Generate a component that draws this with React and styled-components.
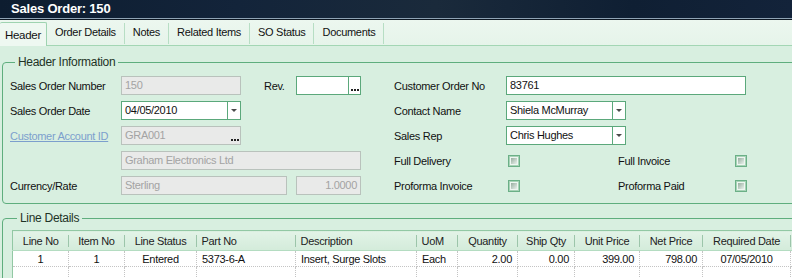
import React from 'react'
import styled, { createGlobalStyle } from 'styled-components'

const Global = createGlobalStyle`
  body {
    margin: 0;
    overflow: hidden;
    background: #d8efe0;
    font-family: "Liberation Sans", Arial, sans-serif;
    font-size: 11px;
    letter-spacing: -0.3px;
    color: #111;
  }
`

const Window = styled.div`
  width: 792px;
  height: 278px;
  overflow: hidden;
  background: #d8efe0;
`

const TitleBar = styled.div`
  height: 18px;
  line-height: 18px;
  padding-left: 11px;
  background: linear-gradient(90deg, #0d1d30 0%, #13243a 30%, #1a2a3b 55%, #0f1f33 80%, #13233a 100%);
  border-bottom: 1px solid #8fa3b4;
  box-shadow: 0 1px 0 #0c1621;
  color: #fff;
  font-weight: bold;
  font-size: 13px;
  letter-spacing: -0.2px;
`

const TabStrip = styled.div`
  margin-top: 1px;
  height: 25px;
  display: flex;
  align-items: flex-end;
  background: linear-gradient(180deg, #ecf7ef, #e6f4ea);
  border-bottom: 1px solid #a3d6b4;
`

const Tab = styled.div`
  height: ${p => (p.$active ? '23px' : '21px')};
  line-height: ${p => (p.$active ? '25px' : '19px')};
  padding: 0 ${p => (p.$active ? '5px' : '8px')};
  border-right: 1px solid ${p => (p.$active ? '#9ed3b0' : '#b7dec4')};
  border-top: ${p => (p.$active ? '1px solid #9ed3b0' : 'none')};
  border-radius: ${p => (p.$active ? '2px 2px 0 0' : '0')};
  background: ${p => (p.$active ? '#eef8f1' : 'transparent')};
  margin-bottom: ${p => (p.$active ? '-1px' : '1px')};
  font-size: ${p => (p.$active ? '11.5px' : '11px')};
  white-space: nowrap;
`

const Body = styled.div`
  padding: 9px 0 0 2px;
`

const Group = styled.fieldset`
  margin: 0 0 ${p => p.$mb || 0}px 0;
  width: 820px;
  padding: ${p => p.$pad};
  border: 1px solid #5fae7e;
  border-radius: 4px;
  box-sizing: border-box;
`

const Legend = styled.legend`
  margin-left: 5px;
  padding: 0 3px;
  font-size: 12px;
  color: #1e3326;
  line-height: 14px;
`

const FormArea = styled.div`
  display: flex;
  gap: 33px;
`

const Column = styled.div`
  display: flex;
  flex-direction: column;
  width: ${p => p.$w}px;
`

const Row = styled.div`
  height: 25px;
  display: flex;
  align-items: center;
`

const Label = styled.div`
  width: ${p => p.$w || 111}px;
  flex: none;
  font-size: 11px;
  white-space: nowrap;
`

const LinkLabel = styled(Label)`
  color: #7c9fcd;
  text-decoration: underline;
`

const Box = styled.div`
  width: ${p => p.$w}px;
  height: 19px;
  box-sizing: border-box;
  flex: none;
  display: flex;
  align-items: stretch;
  margin-left: ${p => p.$ml || 0}px;
  border: 1px solid ${p => (p.$disabled ? '#b9c2bc' : '#5ba87b')};
  background: ${p => (p.$disabled ? '#e9eae9' : '#fff')};
  color: ${p => (p.$disabled ? '#a3a3a3' : '#111')};
`

const BoxText = styled.div`
  flex: 1;
  padding: 0 3px;
  line-height: 17px;
  font-size: 11px;
  text-align: ${p => p.$align || 'left'};
  overflow: hidden;
  white-space: nowrap;
`

const DropButton = styled.div`
  width: 12px;
  border-left: 1px solid #5ba87b;
  display: flex;
  align-items: center;
  justify-content: center;
  &::after {
    content: '';
    border-left: 3px solid transparent;
    border-right: 3px solid transparent;
    border-top: 3px solid #4a4a4a;
  }
`

const EllipsisButton = styled.div`
  width: 12px;
  border-left: 1px solid ${p => (p.$disabled ? 'transparent' : '#5ba87b')};
  display: flex;
  align-items: flex-end;
  justify-content: center;
  gap: 1px;
  padding-bottom: 3px;
  box-sizing: border-box;
`

const Dot = styled.span`
  width: 2px;
  height: 2px;
  background: #222;
`

const Check = styled.div`
  width: 12px;
  height: 12px;
  box-sizing: border-box;
  margin-left: 2px;
  border: 1px solid #6bb087;
  padding: 2px;
  background: #eef6f1;
  box-shadow: inset 0 0 0 1px #a8d3b7;
  flex: none;
  &::after {
    content: '';
    display: block;
    width: 100%;
    height: 100%;
    background: linear-gradient(135deg, #97ad9f, #e9f1ec);
  }
`

const CheckCell = styled.div`
  width: 112px;
  flex: none;
  display: flex;
`

const Grid = styled.table`
  border-collapse: collapse;
  table-layout: fixed;
  width: 800px;
  background: #fff;
  border-top: 1px solid #92c8a4;
  border-left: 1px solid #92c8a4;
  font-size: 11px;
`

const Head = styled.th`
  height: 19px;
  padding: 0 5px;
  font-weight: normal;
  background: linear-gradient(180deg, #e2f3e7, #d3ebda);
  border-bottom: 1px solid #b4dcc1;
  text-align: ${p => p.$align || 'center'};
  white-space: nowrap;
  position: relative;
  color: #222;
  &::after {
    content: '';
    position: absolute;
    right: 0;
    top: 4px;
    bottom: 3px;
    border-right: 1px solid #9cc5aa;
  }
`

const Cell = styled.td`
  height: 15px;
  padding: 0 5px;
  text-align: ${p => p.$align || 'center'};
  border-right: 1px dotted #c4c4c4;
  border-bottom: 1px dotted #c4c4c4;
  white-space: nowrap;
  overflow: hidden;
`

const columns = [
  { name: 'Line No', w: 56 },
  { name: 'Item No', w: 56 },
  { name: 'Line Status', w: 72 },
  { name: 'Part No', w: 99, align: 'left' },
  { name: 'Description', w: 121, align: 'left' },
  { name: 'UoM', w: 41, align: 'left' },
  { name: 'Quantity', w: 60 },
  { name: 'Ship Qty', w: 57 },
  { name: 'Unit Price', w: 65 },
  { name: 'Net Price', w: 63 },
  { name: 'Required Date', w: 88 },
  { name: '', w: 22 },
]

const lines = [
  [
    ['1'], ['1'], ['Entered'], ['5373-6-A', 'left'], ['Insert, Surge Slots', 'left'],
    ['Each', 'left'], ['2.00', 'right'], ['0.00', 'right'], ['399.00', 'right'],
    ['798.00', 'right'], ['07/05/2010'], [''],
  ],
  [[''], [''], [''], [''], [''], [''], [''], [''], [''], [''], [''], ['']],
]

const tabs = ['Header', 'Order Details', 'Notes', 'Related Items', 'SO Status', 'Documents']

const Ellipsis = ({ disabled }) => (
  <EllipsisButton $disabled={disabled}>
    <Dot /><Dot /><Dot />
  </EllipsisButton>
)

export default function App() {
  return (
    <Window>
      <Global />
      <TitleBar>Sales Order: 150</TitleBar>
      <TabStrip>
        {tabs.map((t, i) => (
          <Tab key={t} $active={i === 0}>{t}</Tab>
        ))}
      </TabStrip>
      <Body>
        <Group $pad="4px 0 5px 7px" $mb={7}>
          <Legend>Header Information</Legend>
          <FormArea>
            <Column $w={351}>
              <Row>
                <Label>Sales Order Number</Label>
                <Box $w={120} $disabled><BoxText>150</BoxText></Box>
                <Label $w={32} style={{ marginLeft: 23 }}>Rev.</Label>
                <Box $w={65}><BoxText /><Ellipsis /></Box>
              </Row>
              <Row>
                <Label>Sales Order Date</Label>
                <Box $w={120}><BoxText>04/05/2010</BoxText><DropButton /></Box>
              </Row>
              <Row>
                <LinkLabel>Customer Account ID</LinkLabel>
                <Box $w={120} $disabled><BoxText>GRA001</BoxText><Ellipsis disabled /></Box>
              </Row>
              <Row>
                <Label />
                <Box $w={240} $disabled><BoxText>Graham Electronics Ltd</BoxText></Box>
              </Row>
              <Row>
                <Label>Currency/Rate</Label>
                <Box $w={166} $disabled><BoxText>Sterling</BoxText></Box>
                <Box $w={65} $ml={9} $disabled><BoxText $align="right">1.0000</BoxText></Box>
              </Row>
            </Column>
            <Column $w={360}>
              <Row>
                <Label $w={112}>Customer Order No</Label>
                <Box $w={240}><BoxText>83761</BoxText></Box>
              </Row>
              <Row>
                <Label $w={112}>Contact Name</Label>
                <Box $w={120}><BoxText>Shiela McMurray</BoxText><DropButton /></Box>
              </Row>
              <Row>
                <Label $w={112}>Sales Rep</Label>
                <Box $w={120}><BoxText>Chris Hughes</BoxText><DropButton /></Box>
              </Row>
              <Row>
                <Label $w={112}>Full Delivery</Label>
                <CheckCell><Check /></CheckCell>
                <Label $w={115}>Full Invoice</Label>
                <Check />
              </Row>
              <Row>
                <Label $w={112}>Proforma Invoice</Label>
                <CheckCell><Check /></CheckCell>
                <Label $w={115}>Proforma Paid</Label>
                <Check />
              </Row>
            </Column>
          </FormArea>
        </Group>
        <Group $pad="5px 0 10px 9px">
          <Legend>Line Details</Legend>
          <Grid>
            <colgroup>
              {columns.map((c, i) => <col key={i} style={{ width: c.w }} />)}
            </colgroup>
            <thead>
              <tr>
                {columns.map((c, i) => (
                  <Head key={i} $align={c.align}>{c.name}</Head>
                ))}
              </tr>
            </thead>
            <tbody>
              {lines.map((row, r) => (
                <tr key={r}>
                  {row.map(([v, a], i) => (
                    <Cell key={i} $align={a}>{v}</Cell>
                  ))}
                </tr>
              ))}
            </tbody>
          </Grid>
        </Group>
      </Body>
    </Window>
  )
}
